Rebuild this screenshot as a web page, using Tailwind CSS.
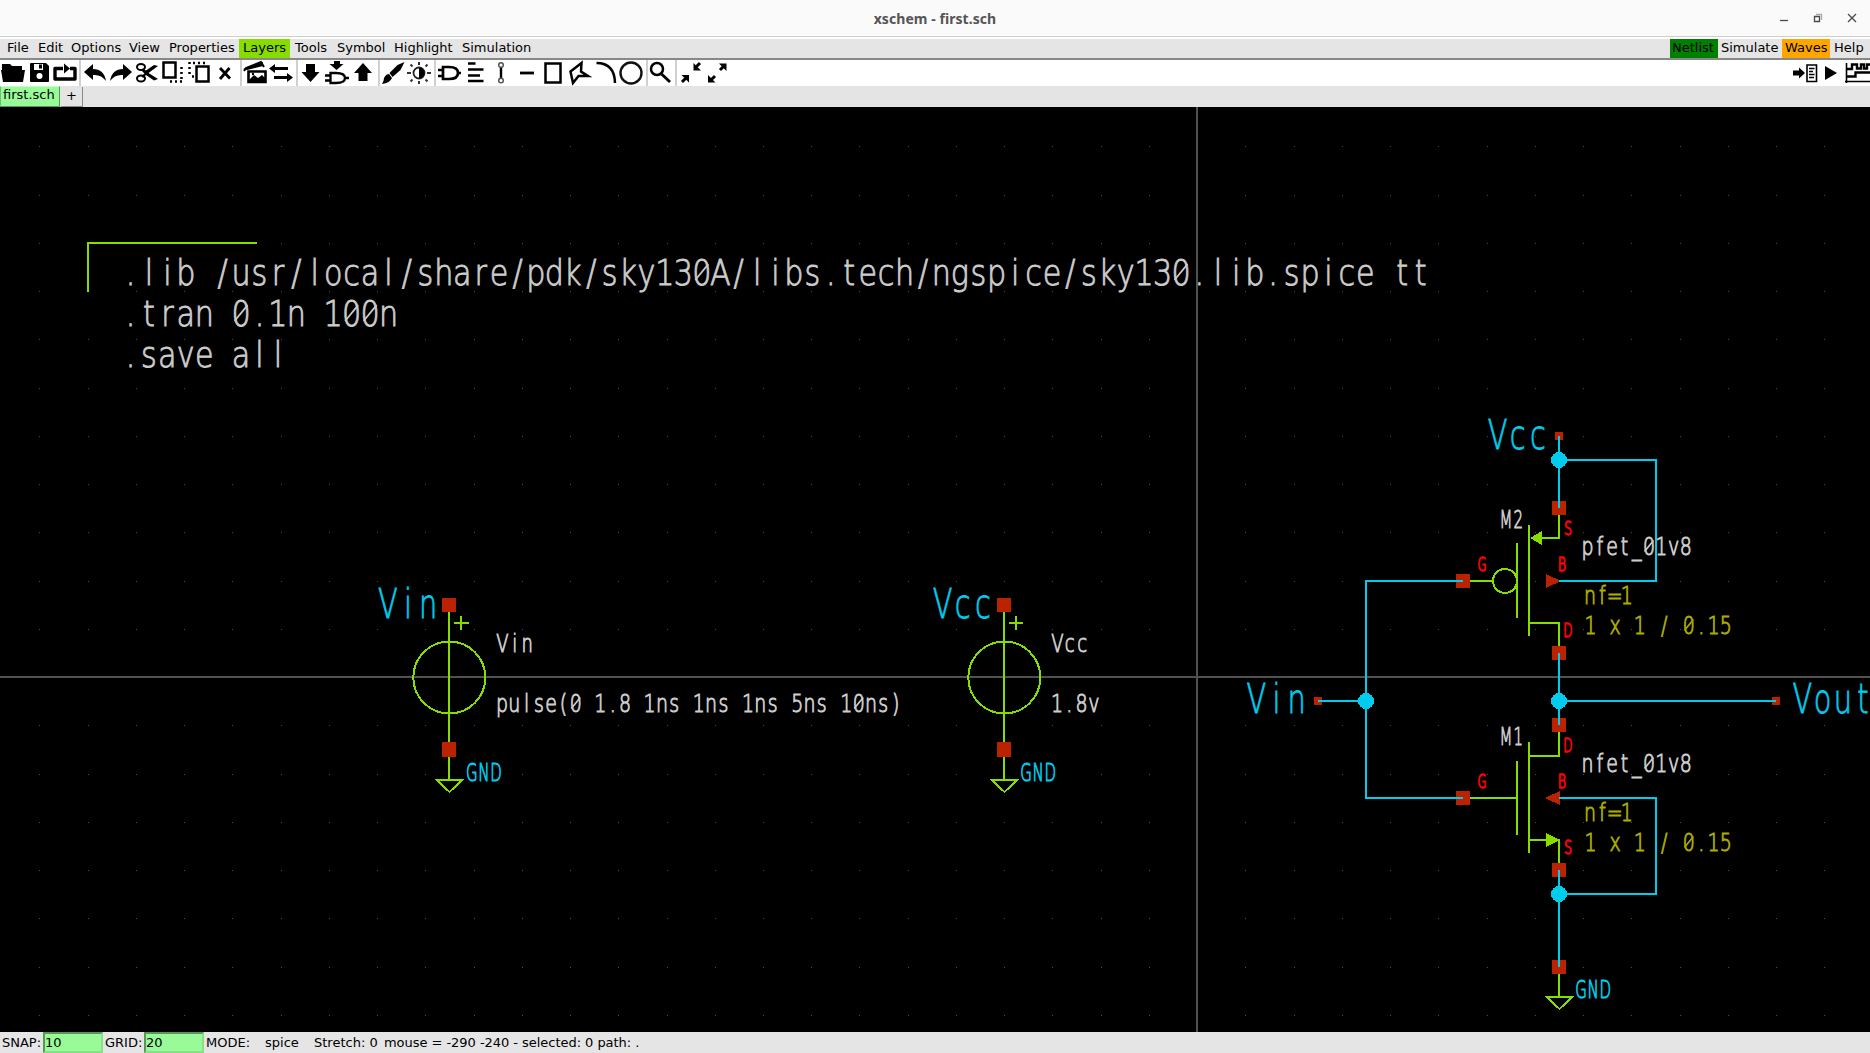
<!DOCTYPE html>
<html lang="en">
<head>
<meta charset="utf-8">
<title>xschem - first.sch</title>
<script src="https://cdn.jsdelivr.net/npm/@tailwindcss/browser@4"></script>
</head>
<body class="w-[1870px] h-[1053px] overflow-hidden flex flex-col bg-black text-black font-['DejaVu_Sans',sans-serif] text-[13px] leading-[18px] whitespace-nowrap">

<!-- Title bar -->
<header class="h-[37px] shrink-0 bg-[#fafafa] border-b border-[#cfcfcf] grid grid-cols-3 items-center">
  <span></span>
  <h1 class="text-center text-[#555] font-bold text-[14px] pt-[2px] tracking-[0.06px] font-['Noto_Sans',sans-serif] [font-variant-ligatures:none]">xschem - first.sch</h1>
  <svg class="justify-self-end" width="110" height="36" viewBox="1760 0 110 36" fill="none" stroke="#4a4a4a" stroke-width="1.3">
    <path d="M1780 20.5h8"/><path d="M1814.5 16.500h5v5h-5z"/><path d="M1816 14.500h5.500v5.500" stroke="#aaa"/><path d="M1848 14l8 8M1856 14l-8 8"/>
  </svg>
</header>

<!-- Menu bar -->
<nav class="h-[23px] shrink-0 bg-[#e5e5e5] border-t-2 border-t-white border-b-2 border-b-[#888] flex pl-[2px] pr-[2px]">
  <div class="w-[32px] pl-[5px]">File</div><div class="w-[33px] pl-1">Edit</div><div class="w-[58px] pl-1">Options</div><div class="w-[40px] pl-1">View</div><div class="w-[74px] pl-1">Properties</div><div class="w-[51px] pl-1 bg-[#88dd00]">Layers</div><div class="w-[43px] pl-[5px]">Tools</div><div class="w-[57px] pl-1">Symbol</div><div class="w-[67px] pl-1">Highlight</div><div class="w-[78px] pl-[5px]">Simulation</div>
  <div class="grow"></div>
  <div class="w-[48px] pl-[2px] bg-[#008000]">Netlist</div><div class="w-[64px] pl-[3px]">Simulate</div><div class="w-[48px] pl-[3px] bg-[#ffa500]">Waves</div><div class="w-[38px] pl-1">Help</div>
</nav>

<!-- Toolbar -->
<div class="h-[26px] shrink-0 bg-white flex" id="toolbar">
  <svg width="27" height="26" viewBox="0 60 27 26"><path d="M2 64h8l2 2h10v4H2zM1 70h24l-2 12H3z"/></svg>
  <svg width="24" height="26" viewBox="27 60 24 26"><path d="M31 63h15l3 3v15q0 1-1 1H31q-1 0-1-1V64q0-1 1-1z"/><path d="M34 64h9v6h-9z" fill="#fff"/><path d="M39 64.500h3v4h-3z"/><circle cx="39.500" cy="76" r="3" fill="#fff"/></svg>
  <svg width="28" height="26" viewBox="51 60 28 26"><path d="M63 68.500H55v10.500h20V68.500h-5" fill="none" stroke="#000" stroke-width="3.400" stroke-linejoin="round"/><path d="M64 63.500l6 5-6 5z"/></svg>
  <i class="w-[2px] bg-[#d0d0d0]"></i>
  <svg width="26" height="26" viewBox="81 60 26 26"><path d="M84 72l9-8v5q11 0 13 12-5-7-13-6v5z"/></svg>
  <svg width="26" height="26" viewBox="107 60 26 26"><path d="M132 72l-9-8v5q-11 0-13 12 5-7 13-6v5z"/></svg>
  <svg width="27" height="26" viewBox="133 60 27 26"><g fill="none" stroke="#000" stroke-width="2"><ellipse cx="141" cy="67" rx="4" ry="3"/><ellipse cx="141" cy="78.500" rx="4" ry="3"/></g><path d="M143 68l3 2.500 8-5.500 4 1-9.500 7 9.500 6-4 1.500-8-5.500-3 3-1.500-2 3-2.500-3-3z"/></svg>
  <svg width="26" height="26" viewBox="160 60 26 26" fill="none" stroke="#000" stroke-width="2.500"><path d="M163.500 62.500h12v15h-12z"/><path d="M181.500 67v14M170 81.500h12" stroke-dasharray="2 3"/></svg>
  <svg width="26" height="26" viewBox="186 60 26 26" fill="none" stroke="#000" stroke-width="2.500"><path d="M196.500 66.500h12v15h-12z"/><path d="M189.500 62v15M193 63h12M192 76.500h3" stroke-dasharray="2 3"/></svg>
  <svg width="28" height="26" viewBox="212 60 28 26"><path d="M220 68l10 10.500M229.500 68l-9.500 11" stroke="#000" stroke-width="2.800"/></svg>
  <i class="w-[2px] bg-[#d0d0d0]"></i>
  <svg width="26" height="26" viewBox="242 60 26 26" fill="none" stroke="#000" stroke-width="2"><path d="M248.500 71.500h17v10.500h-17z" stroke-width="2.600"/><path d="M244 71l2-3 15-6 3 5"/><path d="M243 69l20-7v4l-16 4z" fill="#000" stroke="none"/><path d="M249 80l5-5 4 3 4-3 3 3v4h-16z" fill="#000" stroke="none"/><circle cx="253" cy="74" r="1.200" fill="#000" stroke="none"/></svg>
  <svg width="28" height="26" viewBox="268 60 28 26"><path d="M273 68.500h15M274 77.500h15" stroke="#000" stroke-width="3"/><path d="M269 68.500l6-4.500v9zM293 77.500l-6-4.500v9z"/></svg>
  <i class="w-[2px] bg-[#d0d0d0]"></i>
  <svg width="26" height="26" viewBox="298 60 26 26"><path d="M306 64h9v8h4.500l-9 10-9-10h4.500z"/></svg>
  <svg width="27" height="26" viewBox="324 60 27 26"><path d="M334 61h6v3h3.500l-7 6-7-6h4.500z"/><path d="M330.500 73H336q9 0 9 5t-9 5h-5.500zM325 75.500h5M325 80.500h5M345 78h4" fill="none" stroke="#000" stroke-width="2.300"/></svg>
  <svg width="27" height="26" viewBox="351 60 27 26"><path d="M358.500 81h9v-8h4.500l-9-10-9 10h4.500z"/></svg>
  <i class="w-[2px] bg-[#d0d0d0]"></i>
  <svg width="26" height="26" viewBox="380 60 26 26"><path d="M404.500 62l-4 8-8 7-3-4 8-8zM389 74l3 4q-2 5-10 6 2-3 2-6 2-4 5-4z"/></svg>
  <svg width="28" height="26" viewBox="406 60 28 26"><circle cx="419" cy="73" r="5.500" fill="#fff" stroke="#222" stroke-width="1.800"/><path d="M419 67.500a5.500 5.500 0 0 1 0 11z"/><path d="M419 62v3M419 81v3M407 73h4M427 73h4M410.500 64.500l2 2M427.500 64.500l-2 2M410.500 81.500l2-2M427.500 81.500l-2-2" stroke="#333" stroke-width="2"/></svg>
  <i class="w-[2px] bg-[#d0d0d0]"></i>
  <svg width="28" height="26" viewBox="436 60 28 26" fill="none" stroke="#000" stroke-width="2.700"><path d="M443 67h6q9 0 9 6t-9 6h-6zM438 70h5M438 76h5M458 73h3"/></svg>
  <svg width="26" height="26" viewBox="464 60 26 26"><path d="M468 63.500h7.500M468 69.500h15.500M468 75.500h12M468 81h15.500" stroke="#000" stroke-width="2.500"/></svg>
  <svg width="24" height="26" viewBox="490 60 24 26" fill="none"><path d="M501 67v11" stroke="#000" stroke-width="2.400"/><g stroke="#555" stroke-width="1.500"><circle cx="501" cy="65" r="2.300"/><circle cx="501" cy="80.500" r="2.300"/></g></svg>
  <svg width="26" height="26" viewBox="514 60 26 26"><path d="M520 73h14" stroke="#000" stroke-width="2.800"/></svg>
  <svg width="26" height="26" viewBox="540 60 26 26"><path d="M545.500 63.500h15v19h-15z" fill="none" stroke="#000" stroke-width="2.500"/></svg>
  <svg width="26" height="26" viewBox="566 60 26 26"><path d="M581.500 63l-11 8.500 2.500 11.500 5.500-7h9.500l-7-4.500z" fill="none" stroke="#000" stroke-width="2.500"/></svg>
  <svg width="27" height="26" viewBox="592 60 27 26"><path d="M596.500 63q18 0 18.500 20" fill="none" stroke="#000" stroke-width="2.500"/></svg>
  <svg width="27" height="26" viewBox="619 60 27 26"><circle cx="631" cy="73" r="10.500" fill="none" stroke="#111" stroke-width="2.400"/></svg>
  <i class="w-[2px] bg-[#d0d0d0]"></i>
  <svg width="27" height="26" viewBox="648 60 27 26" fill="none" stroke="#000" stroke-width="2.500"><circle cx="657" cy="69" r="6"/><path d="M661.500 74l8.500 8" stroke-width="3"/></svg>
  <i class="w-[2px] bg-[#d0d0d0]"></i>
  <svg width="26" height="26" viewBox="677 60 26 26"><path d="M700 63l-4.500 4.500M682 82l4.500-4.500" stroke="#000" stroke-width="3"/><path d="M693.500 63v7.500h7.500zM681.500 75h7.500v7.500z"/></svg>
  <svg width="26" height="26" viewBox="703 60 26 26"><path d="M720 70l4-4M715 76l-4 4" stroke="#000" stroke-width="3"/><path d="M719 63.500h7.500v7.500zM708 75v7.500h7.500z"/></svg>
  <span class="grow"></span>
  <svg width="28" height="26" viewBox="1792 60 28 26"><path d="M1793 70.500h6v-3l6 5.500-6 5.500v-3h-6z"/><path d="M1807 65h9.500v16.500H1807z" fill="none" stroke="#000" stroke-width="1.600"/><path d="M1809 68.500h5.500M1809 71.500h4M1809 74.500h5.500M1809 77.500h5" stroke="#000" stroke-width="1.300"/></svg>
  <svg width="24" height="26" viewBox="1820 60 24 26"><path d="M1825 66l12 7-12 7z"/></svg>
  <svg width="26" height="26" viewBox="1844 60 26 26" fill="none" stroke="#000"><path d="M1846.500 63v20M1845 81.500h25" stroke-width="1.600"/><path d="M1846 69h6v-4.500h5v4h4v-4h3v4h3v-4h3M1846.500 76.500h9v-4h15" stroke-width="2.400"/></svg>
</div>

<!-- Tabs -->
<div class="h-[21px] shrink-0 bg-[#e4e4e4] flex">
  <div class="w-[60px] h-[21px] bg-[#98fb98] border border-t-[#c8ffc8] border-l-[#6fbf6f] border-b-[#5a965a] border-r-[#5a965a] pl-[2px] leading-[16px]">first.sch</div>
  <div class="w-[22px] ml-px mt-px h-[20px] border-r border-b border-[#888] text-center leading-[18px]">+</div>
</div>

<!-- Schematic canvas -->
<main class="h-[925px] shrink-0">
<svg class="block" width="1870" height="925" viewBox="0 107 1870 925" shape-rendering="crispEdges">
  <rect y="107" width="1870" height="925" fill="#000"/>
  <g id="grid" fill="#4d4d4d"></g>
  <path d="M1197 107V1032M0 677H1870" stroke="#505050" stroke-width="2"/>
  <g id="labels" text-anchor="middle" class="font-['DejaVu_Sans_Light','DejaVu_Sans',sans-serif]" shape-rendering="auto"></g>
  <g fill="none" stroke="#88dd00" stroke-width="2">
    <path d="M88 292V243H257"/>
    <path d="M449 612V742M449 757V780M437 780H462L449.500 792zM454 623h15M461 616v14"/><circle cx="449.300" cy="677.500" r="36"/>
    <path d="M1004 612V742M1004 757V780M992 780H1017L1004.500 792zM1009 623h14M1016 616v14"/><circle cx="1004.300" cy="677.500" r="36"/>
    <path d="M1559 515V538H1540M1529 525V636M1517 543V618M1470 581H1493M1529 623H1559V646"/><circle cx="1505" cy="581" r="12"/>
    <path d="M1559 732V756H1529M1529 742V853M1517 761V835M1470 798H1517M1529 840H1559V863M1559 974V997M1547 997H1572L1559.500 1009z"/>
    <path d="M1530 538l12-7v14zM1546 833v14l14-7z" fill="#88dd00" stroke="none"/>
  </g>
  <path fill="#bb2200" d="M442 598h14v14h-14zM442 742h14v15h-14zM997 598h14v14h-14zM997 742h14v15h-14zM1555 432h8v8h-8zM1552 501h14v14h-14zM1456 574h14v14h-14zM1552 646h14v14h-14zM1552 718h14v14h-14zM1456 791h14v14h-14zM1552 863h14v14h-14zM1552 960h14v14h-14zM1314 697h8v8h-8zM1772 697h8v8h-8zM1546 574l15 7-15 7zM1560 791l-15 7 15 7z"/>
  <g fill="none" stroke="#00ccee" stroke-width="2">
    <path d="M1559 436V508M1559 460H1656V581H1559M1463 581H1366V798H1463M1318 701H1366M1559 653V725M1559 701H1776M1559 798H1656V894H1559M1559 870V967"/>
    <g fill="#00ccee" stroke="none"><circle cx="1559" cy="460" r="8"/><circle cx="1366" cy="701" r="8"/><circle cx="1559" cy="701" r="8"/><circle cx="1559" cy="894" r="8"/></g>
  </g>
</svg>
</main>

<!-- Status bar -->
<footer class="h-[21px] shrink-0 bg-[#e5e5e5] flex leading-[21px]">
  <span class="w-[43px] pl-[2px]">SNAP:</span><span class="w-[60px] bg-[#98fb98] border-2 border-t-[#5a965a] border-l-[#5a965a] border-b-[#88e088] border-r-[#88e088] leading-[17px]">10</span>
  <span class="w-[41px] pl-[2px]">GRID:</span><span class="w-[60px] bg-[#98fb98] border-2 border-t-[#5a965a] border-l-[#5a965a] border-b-[#88e088] border-r-[#88e088] leading-[17px]">20</span>
  <span class="w-[59px] pl-[2px]">MODE:</span><span class="w-[51px] pl-[2px]">spice</span><span class="w-[70px]">Stretch: 0</span><span class="tracking-[-0.04px]">mouse = -290 -240 - selected: 0 path: .</span>
</footer>

<script>
const NS = 'http://www.w3.org/2000/svg';
const grid = document.getElementById('grid');
for (let j = 0; j < 19; j++) for (let i = 0; i < 38; i++) {
  const r = document.createElementNS(NS, 'rect');
  r.setAttribute('x', Math.floor(39.9 + i * 48.24));
  r.setAttribute('y', Math.floor(146.95 + j * 48.25));
  r.setAttribute('width', 1); r.setAttribute('height', 1);
  grid.append(r);
}
// text, centre of first cell, baseline, cell width, font size, horizontal scale, extra stroke, colour
const W = '#cccccc', C = '#00ccee', Y = '#aaaa00', R = '#ff0000';
const labels = [
  ['.lib /usr/local/share/pdk/sky130A/libs.tech/ngspice/sky130.lib.spice tt', 130.5, 285, 18.43, 36, .84, .9, W],
  ['.tran 0.1n 100n', 130.5, 326, 18.43, 36, .84, .9, W],
  ['.save all', 130.5, 367, 18.43, 36, .84, .9, W],
  ['Vin', 387.8, 618.5, 20.2, 40, .72, .8, C], ['Vcc', 942.5, 618.5, 20.2, 40, .72, .8, C],
  ['Vcc', 1497.5, 449.5, 20.2, 40, .72, .8, C], ['Vin', 1256.3, 713.5, 20.2, 40, .72, .8, C],
  ['Vout', 1802.4, 713.5, 20.2, 40, .72, .8, C],
  ['Vin', 502.5, 652, 12.3, 25, .72, 1, W], ['Vcc', 1057.5, 652, 12.3, 25, .72, 1, W],
  ['pulse(0 1.8 1ns 1ns 1ns 5ns 10ns)', 502, 712, 12.3, 25, .76, 1, W], ['1.8v', 1057, 712, 12.3, 25, .76, 1, W],
  ['GND', 471.7, 781.5, 12.2, 25, .6, 1, C], ['GND', 1026, 781.5, 12.2, 25, .6, 1, C], ['GND', 1581, 998.5, 12.2, 25, .6, 1, C],
  ['M2', 1506, 528, 12.3, 25, .6, 1, W], ['M1', 1506, 745, 12.3, 25, .6, 1, W],
  ['pfet_01v8', 1587.5, 555, 12.3, 25, .76, 1, W], ['nfet_01v8', 1587.5, 772, 12.3, 25, .76, 1, W],
  ['nf=1', 1590, 604, 12.3, 25, .76, 1, Y], ['nf=1', 1590, 821, 12.3, 25, .76, 1, Y],
  ['1 x 1 / 0.15', 1590.5, 634, 12.3, 25, .76, 1, Y], ['1 x 1 / 0.15', 1590.5, 851, 12.3, 25, .76, 1, Y],
  ['S', 1568, 535.5, 9, 19.5, .65, 1.4, R], ['B', 1562, 571.5, 9, 19.5, .65, 1.4, R], ['G', 1482, 571.5, 9, 19.5, .6, 1.4, R], ['D', 1568, 637.5, 9, 19.5, .62, 1.4, R],
  ['D', 1568, 752.5, 9, 19.5, .62, 1.4, R], ['B', 1562, 788.5, 9, 19.5, .65, 1.4, R], ['G', 1482, 788.5, 9, 19.5, .6, 1.4, R], ['S', 1568, 854.5, 9, 19.5, .65, 1.4, R],
];
const box = document.getElementById('labels');
for (const [text, x, y, step, size, sx, edge, fill] of labels) {
  const t = document.createElementNS(NS, 'text');
  t.setAttribute('transform', `scale(${sx} 1)`);
  t.setAttribute('x', [...text].map((_, i) => ((x + i * step) / sx).toFixed(2)).join(' '));
  t.setAttribute('y', y);
  t.setAttribute('font-size', size);
  t.setAttribute('font-weight', 200);
  t.setAttribute('fill', fill);
  t.setAttribute('stroke', fill);
  t.setAttribute('stroke-width', edge);
  t.textContent = text;
  box.append(t);
  // zeros carry a diagonal bar
  [...text].forEach((ch, i) => {
    if (ch !== '0') return;
    const bar = document.createElementNS(NS, 'line'), cx = x + i * step, w = size * .18;
    bar.setAttribute('x1', cx - w); bar.setAttribute('y1', y - size * .14);
    bar.setAttribute('x2', cx + w); bar.setAttribute('y2', y - size * .58);
    bar.setAttribute('stroke', fill); bar.setAttribute('stroke-width', 1.7);
    box.append(bar);
  });
}
</script>
</body>
</html>
